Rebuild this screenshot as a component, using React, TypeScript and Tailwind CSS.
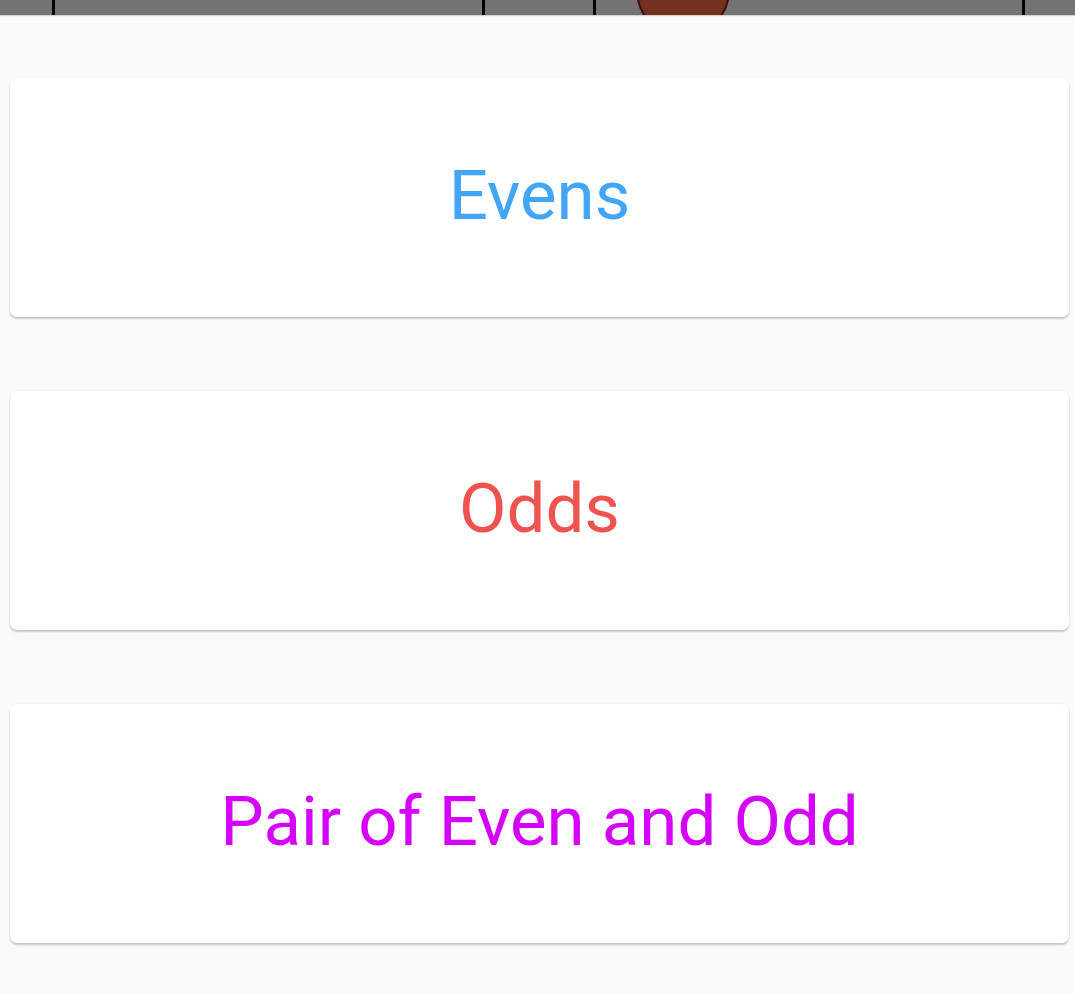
import React from 'react';

const choices = [
  { id: 'evens', label: 'Evens', color: 'text-[#42a5f5]' },
  { id: 'odds', label: 'Odds', color: 'text-[#ef5350]' },
  { id: 'pair', label: 'Pair of Even and Odd', color: 'text-[#d500f9]' },
];

const TopStrip: React.FC = () => (
  <div className="h-[15px] w-full overflow-hidden bg-[#737373] shadow-[0_1px_1px_rgba(0,0,0,0.15)]">
    <svg width="1075" height="15" viewBox="0 0 1075 15" className="block">
      <rect x="52" y="0" width="3" height="15" fill="#000" />
      <rect x="482" y="0" width="3" height="15" fill="#000" />
      <rect x="593" y="0" width="3" height="15" fill="#000" />
      <rect x="1022" y="0" width="3" height="15" fill="#000" />
      <circle cx="683" cy="-10" r="46" fill="#74311f" stroke="#3d0e07" strokeWidth="2" />
    </svg>
  </div>
);

const App: React.FC = () => {
  return (
    <div className="min-h-[994px] w-full bg-[#fafafa] font-['Roboto',sans-serif]">
      <TopStrip />

      <div className="flex flex-col gap-[74px] pl-[10px] pr-[6px] pt-[63px]">
        {choices.map((c) => (
          <button
            key={c.id}
            className="flex h-[239px] w-full items-center justify-center rounded-[7px] bg-white pb-[4px] shadow-[0_2px_2px_rgba(0,0,0,0.2),0_0_2px_rgba(0,0,0,0.08)]"
          >
            <span className={`text-[69px] leading-none ${c.color}`}>{c.label}</span>
          </button>
        ))}
      </div>
    </div>
  );
};

export default App;
